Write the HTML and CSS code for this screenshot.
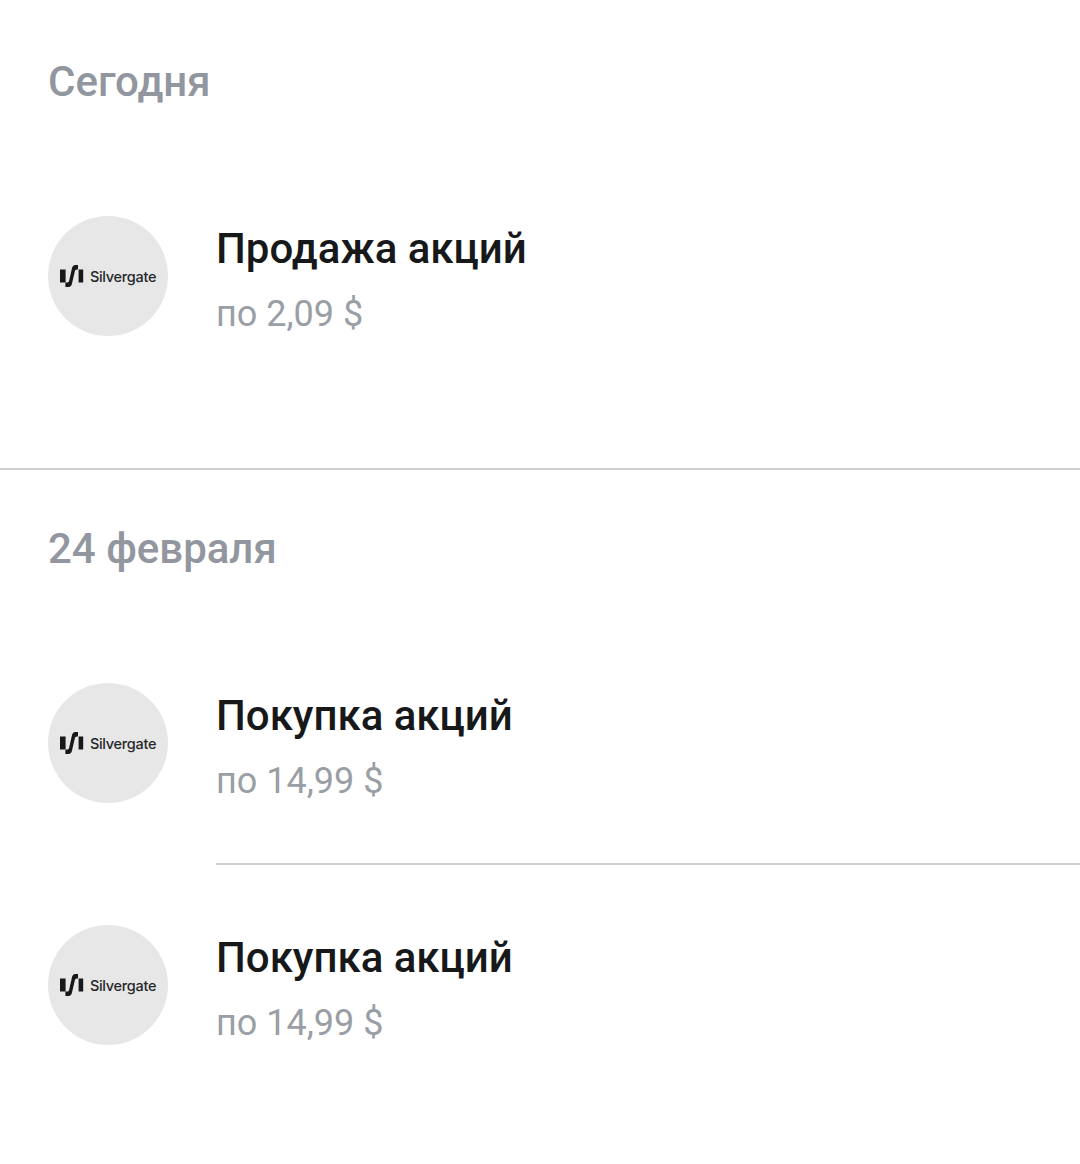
FILE: index.html
```html
<!DOCTYPE html>
<html lang="ru">
<head>
    <meta charset="UTF-8">
    <meta name="viewport" content="width=device-width, initial-scale=1.0">
    <title>Операции</title>
    <link rel="stylesheet" href="styles.css">
</head>
<body>

<svg class="sprite" width="0" height="0">
    <symbol id="sgMark" viewBox="0 0 24 22">
        <rect x="0" y="4.5" width="5.6" height="13"/>
        <rect x="18.6" y="4.5" width="4.6" height="13"/>
        <path d="M5.4 22 L8.4 22 C10.6 22 11.5 20.6 12 18.6 L14.8 6.6 C15.1 5.2 15.6 4.4 16.8 4.4 L18 4.4 L18 0 L15.4 0 C13.4 0 12.4 1.4 11.9 3.4 L9.2 15.4 C8.9 16.8 8.4 17.6 7 17.6 L5.4 17.6 Z"/>
    </symbol>
</svg>

<section class="group">
    <h2 class="group-title">Сегодня</h2>
    <div class="row">
        <div class="logo"><svg class="logo-mark"><use href="#sgMark"/></svg><span class="logo-name">Silvergate</span></div>
        <div class="info">
            <div class="info-title">Продажа акций</div>
            <div class="info-sub">по 2,09 $</div>
        </div>
    </div>
</section>

<section class="group">
    <h2 class="group-title">24 февраля</h2>
    <div class="row">
        <div class="logo"><svg class="logo-mark"><use href="#sgMark"/></svg><span class="logo-name">Silvergate</span></div>
        <div class="info">
            <div class="info-title">Покупка акций</div>
            <div class="info-sub">по 14,99 $</div>
        </div>
    </div>
    <div class="row">
        <div class="logo"><svg class="logo-mark"><use href="#sgMark"/></svg><span class="logo-name">Silvergate</span></div>
        <div class="info">
            <div class="info-title">Покупка акций</div>
            <div class="info-sub">по 14,99 $</div>
        </div>
    </div>
</section>

</body>
</html>
```

FILE: styles.css
```css
body { margin: 0; background: #fff; font-family: Roboto, "Noto Sans", sans-serif; }
.sprite { display: block; height: 0; }
.group { padding-bottom: 72px; border-bottom: 2px solid #cfcfd1; }
.group:first-of-type { padding-top: 3px; }
.group:last-of-type { border-bottom: none; padding-bottom: 0; }
.group-title { margin: 0; height: 153px; padding: 55px 48px 0; box-sizing: border-box; font-size: 42px; line-height: 47px; font-weight: 500; color: #92969e; }
.row { display: flex; align-items: flex-start; gap: 48px; padding-left: 48px; }
.logo { flex: none; width: 120px; height: 120px; margin: 60px 0; border-radius: 50%; background: #e7e7e7; display: flex; align-items: center; justify-content: center; gap: 6px; }
.row + .row .logo { margin-top: 62px; }
.logo-mark { width: 24px; height: 22px; fill: #17181a; }
.logo-name { font-family: Inter, Roboto, sans-serif; font-size: 14.5px; font-weight: 500; letter-spacing: -0.3px; color: #26272a; }
.info { flex: 1; align-self: stretch; display: flex; flex-direction: column; padding-top: 69px; }
.row + .row .info { border-top: 2px solid #cfcfd1; }
.info-title { font-size: 42px; line-height: 47px; font-weight: 500; color: #17181a; }
.info-sub { margin-top: 21px; font-size: 36px; line-height: 42px; color: #9a9ea5; }
```
